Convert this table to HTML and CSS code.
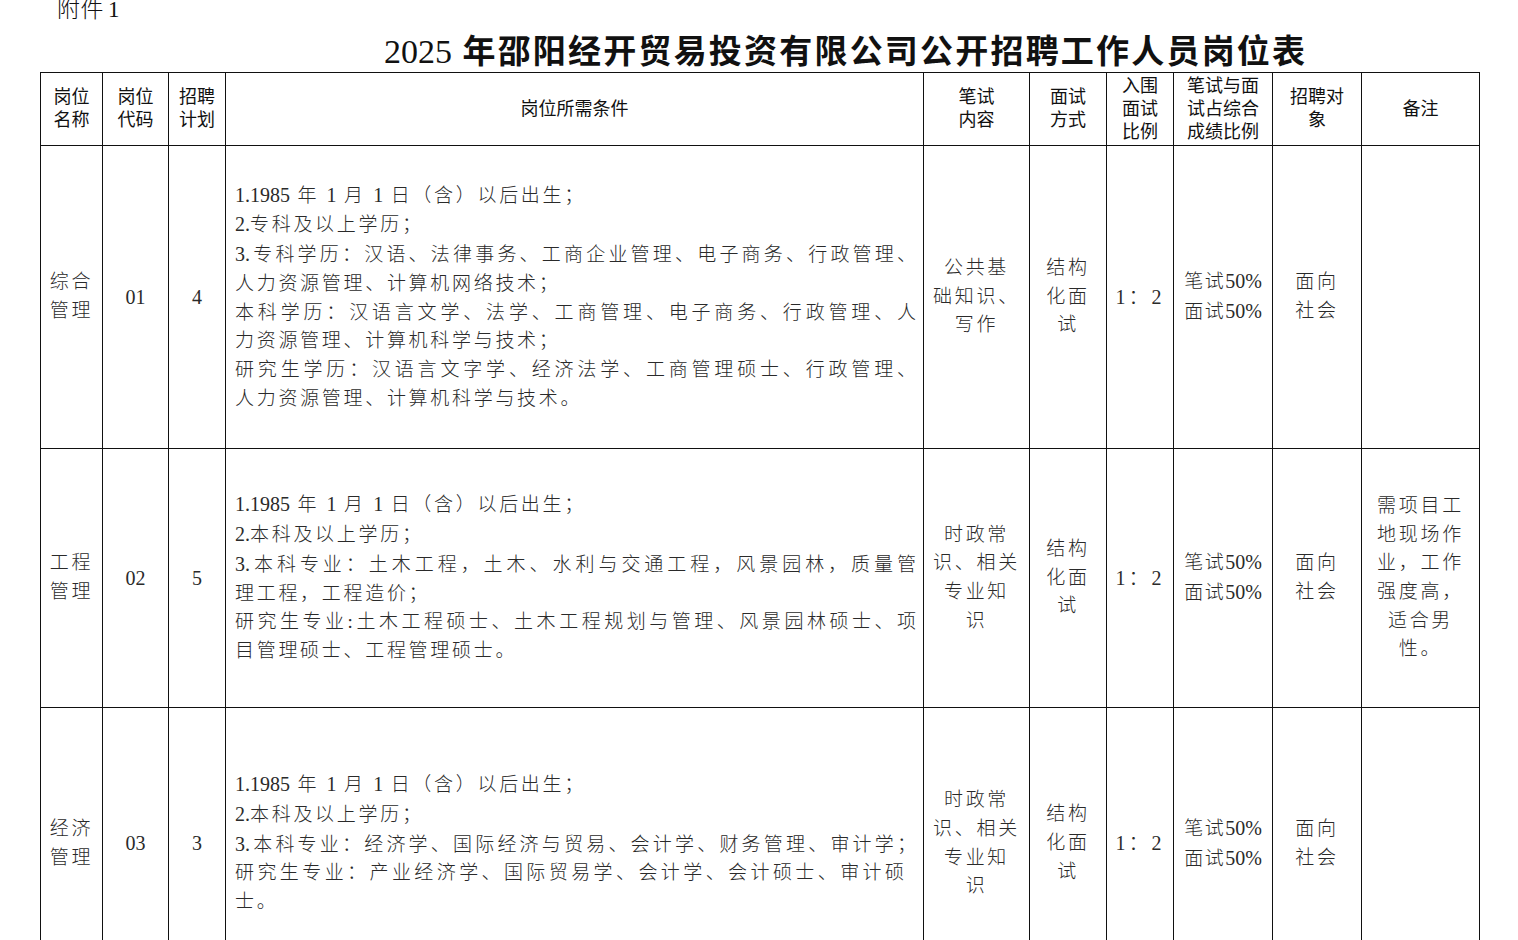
FILE: index.html
```html
<!DOCTYPE html>
<html lang="zh-CN">
<head>
<meta charset="utf-8">
<title>2025年邵阳经开贸易投资有限公司公开招聘工作人员岗位表</title>
<link rel="stylesheet" href="styles.css">
</head>
<body>
<div class="attach">附件<span class="num">1</span></div>
<h1 class="title"><span class="num">2025</span> 年邵阳经开贸易投资有限公司公开招聘工作人员岗位表</h1>
<table class="jobs">
  <colgroup>
    <col class="c1"><col class="c2"><col class="c3"><col class="c4"><col class="c5">
    <col class="c6"><col class="c7"><col class="c8"><col class="c9"><col class="c10">
  </colgroup>
  <thead>
    <tr class="head">
      <th>岗位<br>名称</th>
      <th>岗位<br>代码</th>
      <th>招聘<br>计划</th>
      <th>岗位所需条件</th>
      <th>笔试<br>内容</th>
      <th>面试<br>方式</th>
      <th>入围<br>面试<br>比例</th>
      <th>笔试与面<br>试占综合<br>成绩比例</th>
      <th>招聘对<br>象</th>
      <th>备注</th>
    </tr>
  </thead>
  <tbody>
    <tr class="r1">
      <td>综合<br>管理</td>
      <td class="num">01</td>
      <td class="num">4</td>
      <td class="cond">
        <span class="ln"><span class="num">1.1985</span> 年 <span class="num">1</span> 月 <span class="num">1</span> 日（含）以后出生；</span>
        <span class="ln"><span class="num">2.</span>专科及以上学历；</span>
        <span class="ln full"><span class="num">3.</span>专科学历：汉语、法律事务、工商企业管理、电子商务、行政管理、</span>
        <span class="ln">人力资源管理、计算机网络技术；</span>
        <span class="ln full">本科学历：汉语言文学、法学、工商管理、电子商务、行政管理、人</span>
        <span class="ln">力资源管理、计算机科学与技术；</span>
        <span class="ln full">研究生学历：汉语言文字学、经济法学、工商管理硕士、行政管理、</span>
        <span class="ln">人力资源管理、计算机科学与技术。</span>
      </td>
      <td>公共基<br>础知识、<br>写作</td>
      <td>结构<br>化面<br>试</td>
      <td class="ratio">1：2</td>
      <td class="pct">笔试<span class="num">50%</span><br>面试<span class="num">50%</span></td>
      <td>面向<br>社会</td>
      <td></td>
    </tr>
    <tr class="r2">
      <td>工程<br>管理</td>
      <td class="num">02</td>
      <td class="num">5</td>
      <td class="cond">
        <span class="ln"><span class="num">1.1985</span> 年 <span class="num">1</span> 月 <span class="num">1</span> 日（含）以后出生；</span>
        <span class="ln"><span class="num">2.</span>本科及以上学历；</span>
        <span class="ln full"><span class="num">3.</span>本科专业：土木工程，土木、水利与交通工程，风景园林，质量管</span>
        <span class="ln">理工程，工程造价；</span>
        <span class="ln full">研究生专业:土木工程硕士、土木工程规划与管理、风景园林硕士、项</span>
        <span class="ln">目管理硕士、工程管理硕士。</span>
      </td>
      <td>时政常<br>识、相关<br>专业知<br>识</td>
      <td>结构<br>化面<br>试</td>
      <td class="ratio">1：2</td>
      <td class="pct">笔试<span class="num">50%</span><br>面试<span class="num">50%</span></td>
      <td>面向<br>社会</td>
      <td>需项目工<br>地现场作<br>业，工作<br>强度高，<br>适合男<br>性。</td>
    </tr>
    <tr class="r3">
      <td>经济<br>管理</td>
      <td class="num">03</td>
      <td class="num">3</td>
      <td class="cond">
        <span class="ln"><span class="num">1.1985</span> 年 <span class="num">1</span> 月 <span class="num">1</span> 日（含）以后出生；</span>
        <span class="ln"><span class="num">2.</span>本科及以上学历；</span>
        <span class="ln full"><span class="num">3.</span>本科专业：经济学、国际经济与贸易、会计学、财务管理、审计学；</span>
        <span class="ln full short">研究生专业：产业经济学、国际贸易学、会计学、会计硕士、审计硕</span>
        <span class="ln">士。</span>
      </td>
      <td>时政常<br>识、相关<br>专业知<br>识</td>
      <td>结构<br>化面<br>试</td>
      <td class="ratio">1：2</td>
      <td class="pct">笔试<span class="num">50%</span><br>面试<span class="num">50%</span></td>
      <td>面向<br>社会</td>
      <td></td>
    </tr>
  </tbody>
</table>
</body>
</html>
```

FILE: styles.css
```css
html, body {
  margin: 0;
  padding: 0;
  background: #ffffff;
}

body {
  color: #222;
  font-family: "Liberation Serif", "Noto Sans CJK SC", serif;
}

.attach {
  padding-left: 57px;
  font-family: "Liberation Serif", "Noto Sans CJK SC", serif;
  font-size: 23px;
  line-height: 20px;
  height: 22px;
  color: #111;
  font-weight: 300;
  letter-spacing: 0.5px;
}

.attach .num {
  padding-left: 4px;
}

.title {
  margin: 0;
  padding: 12px 0 0 384px;
  height: 38px;
  font-family: "Liberation Serif", "Noto Sans CJK SC", serif;
  font-size: 33px;
  line-height: 36px;
  font-weight: 700;
  color: #111;
  letter-spacing: 2.2px;
  white-space: nowrap;
}

.title .num {
  font-weight: 400;
  letter-spacing: 0;
  font-size: 34px;
}

.jobs {
  margin-left: 40px;
  width: 1439px;
  border-collapse: collapse;
  table-layout: fixed;
}

.c1 { width: 62px; }
.c2 { width: 66px; }
.c3 { width: 57px; }
.c4 { width: 698px; }
.c5 { width: 106px; }
.c6 { width: 77px; }
.c7 { width: 67px; }
.c8 { width: 99px; }
.c9 { width: 89px; }
.c10 { width: 118px; }

.jobs th,
.jobs td {
  border: 1.5px solid #111;
  padding: 0 2px;
  text-align: center;
  vertical-align: middle;
}

.jobs th {
  font-family: "Liberation Sans", "Noto Sans CJK SC", sans-serif;
  font-size: 18px;
  line-height: 23px;
  font-weight: 400;
  color: #111;
}

.head { height: 73px; }
.r1 { height: 303px; }
.r2 { height: 259px; }
.r3 { height: 272px; }

.jobs td {
  font-size: 19px;
  line-height: 28.7px;
  letter-spacing: 2.7px;
  color: #2a2a2a;
  font-weight: 300;
}

.jobs td.num,
.jobs .num {
  font-family: "Liberation Serif", serif;
  font-size: 20px;
  letter-spacing: 0;
}

.jobs td.ratio {
  letter-spacing: 3px;
  font-size: 20px;
}

.jobs td.pct {
  letter-spacing: 1.5px;
}

.jobs td.cond {
  text-align: left;
  padding: 0 7px 0 9px;
}

.ln {
  display: block;
  white-space: nowrap;
}

.ln.full {
  text-align: justify;
  text-align-last: justify;
  letter-spacing: 0;
  white-space: normal;
}

.ln.short {
  padding-right: 12px;
}
```
